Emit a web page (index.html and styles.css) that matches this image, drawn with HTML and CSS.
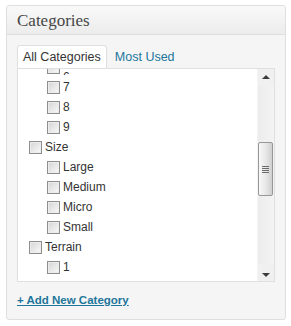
FILE: index.html
```html
<!DOCTYPE html>
<html lang="en">
<head>
    <meta charset="UTF-8">
    <title>Categories</title>
    <link rel="stylesheet" href="styles.css">
</head>
<body>
    <div class="postbox">
        <h3 class="hndle">Categories</h3>
        <div class="inside">
            <ul class="category-tabs">
                <li class="tab active"><a>All Categories</a></li>
                <li class="tab"><a href="#">Most Used</a></li>
            </ul>
            <div class="tabs-panel">
                <div class="checklist-view">
                    <ul class="checklist">
                        <li>
                            <ul class="children">
                                <li><label><input type="checkbox"><span class="clipped">6</span></label></li>
                                <li><label><input type="checkbox">7</label></li>
                                <li><label><input type="checkbox">8</label></li>
                                <li><label><input type="checkbox">9</label></li>
                            </ul>
                        </li>
                        <li><label><input type="checkbox">Size</label>
                            <ul class="children">
                                <li><label><input type="checkbox">Large</label></li>
                                <li><label><input type="checkbox">Medium</label></li>
                                <li><label><input type="checkbox">Micro</label></li>
                                <li><label><input type="checkbox">Small</label></li>
                            </ul>
                        </li>
                        <li><label><input type="checkbox">Terrain</label>
                            <ul class="children">
                                <li><label><input type="checkbox">1</label></li>
                                <li><label><input type="checkbox"></label></li>
                            </ul>
                        </li>
                    </ul>
                </div>
                <div class="scrollbar">
                    <div class="sb-btn sb-up"><span class="arrow-up"></span></div>
                    <div class="sb-track">
                        <div class="sb-thumb"><span class="grip"></span></div>
                    </div>
                    <div class="sb-btn sb-down"><span class="arrow-down"></span></div>
                </div>
            </div>
            <p class="add-new"><a href="#">+ Add New Category</a></p>
        </div>
    </div>
</body>
</html>
```

FILE: styles.css
```css
body {
    margin: 0;
    padding: 5px 0 0 6px;
    background: #fff;
    font-family: "Liberation Sans", Arial, sans-serif;
    font-size: 12px;
    color: #333;
}

.postbox {
    width: 278px;
    height: 313px;
    border: 1px solid #dfdfdf;
    border-radius: 3px;
    background: #f5f5f5;
}

.hndle {
    margin: 0;
    height: 26px;
    padding: 2px 0 0 10px;
    line-height: 26px;
    font-family: "Liberation Serif", Georgia, serif;
    font-size: 17px;
    font-weight: normal;
    color: #464646;
    background: linear-gradient(#f9f9f9, #ececec);
    border-bottom: 1px solid #dfdfdf;
    border-radius: 3px 3px 0 0;
}

.inside {
    padding: 10px 10px 0 10px;
}

.category-tabs {
    display: flex;
    margin: 0;
    padding: 0;
    list-style: none;
}

.tab a {
    display: block;
    height: 22px;
    line-height: 22px;
    padding: 0 5px;
    border: 1px solid transparent;
    border-bottom: none;
    border-radius: 3px 3px 0 0;
    font-size: 12.5px;
    color: #21759b;
    text-decoration: none;
}

.tab.active a {
    background: #fff;
    border-color: #dfdfdf;
    color: #333;
}

.tab + .tab {
    margin-left: 2px;
}

.tabs-panel {
    display: flex;
    height: 212px;
    border: 1px solid #dfdfdf;
    background: #fff;
}

.checklist-view {
    flex: 1;
    overflow: hidden;
}

.checklist {
    margin: -12px 0 0 0;
    padding: 0 0 0 11px;
    list-style: none;
}

.checklist .children {
    margin: 0 0 0 18px;
    padding: 0;
    list-style: none;
}

.checklist label {
    display: flex;
    align-items: center;
    height: 20px;
}

/* first row sits half under the top edge of the scrolled panel */
.clipped {
    line-height: 12px;
    height: 4px;
    overflow: hidden;
    align-self: flex-end;
    margin-bottom: 2px;
}

.checklist input {
    -webkit-appearance: none;
    appearance: none;
    width: 13px;
    height: 13px;
    margin: 1px 3px 0 0;
    border: 1px solid #8e8e8e;
    border-radius: 0;
    background: linear-gradient(135deg, #d4d4d4, #fafafa);
    box-shadow: inset 0 0 0 1px #ececec;
}

.scrollbar {
    display: flex;
    flex-direction: column;
    width: 16px;
    background: #f0f0f0;
    border-left: 1px solid #f4f4f4;
}

.sb-btn {
    display: flex;
    align-items: center;
    justify-content: center;
    height: 17px;
}

.arrow-up {
    width: 0;
    height: 0;
    border-left: 4px solid transparent;
    border-right: 4px solid transparent;
    border-bottom: 4px solid #3c3c3c;
    margin-top: -2px;
}

.arrow-down {
    width: 0;
    height: 0;
    border-left: 4px solid transparent;
    border-right: 4px solid transparent;
    border-top: 4px solid #3c3c3c;
    margin-top: 4px;
}

.sb-track {
    flex: 1;
    padding-top: 56px;
    background: linear-gradient(90deg, #ececec, #f3f3f3);
}

.sb-thumb {
    display: flex;
    align-items: center;
    justify-content: center;
    height: 52px;
    margin: 0 1px 0 0;
    border: 1px solid #979797;
    border-radius: 2px;
    background: linear-gradient(90deg, #f8f8f8, #e4e4e4 60%, #cfcfcf);
}

.grip {
    width: 7px;
    height: 7px;
    background: repeating-linear-gradient(#6b6b6b 0 1px, transparent 1px 2px);
}

.add-new {
    margin: 11px 0 0 0;
    line-height: 14px;
}

.add-new a {
    font-size: 11.5px;
    font-weight: bold;
    color: #21759b;
    text-decoration: underline;
}
```
